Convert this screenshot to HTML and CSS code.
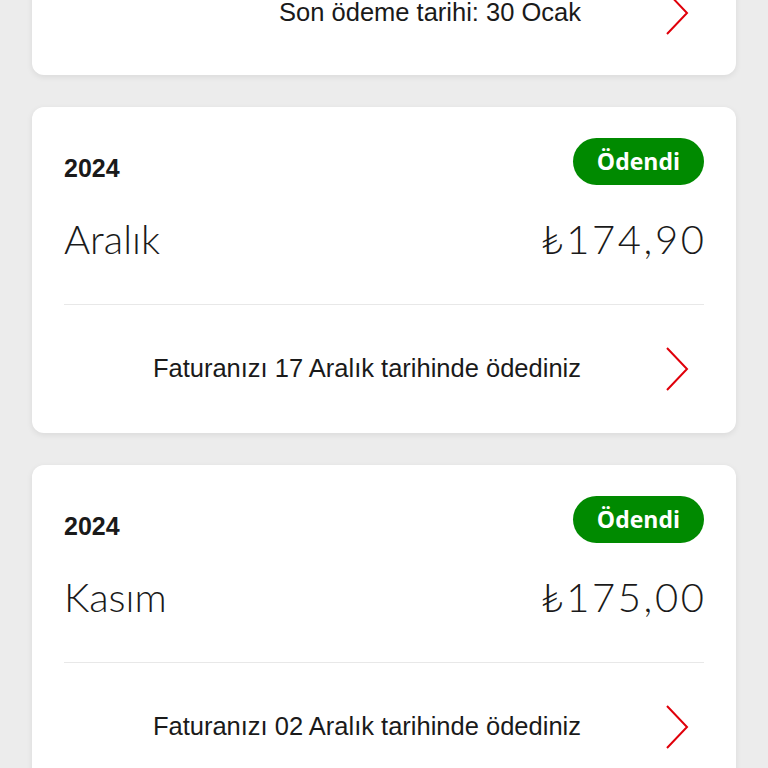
FILE: index.html
```html
<!DOCTYPE html>
<html lang="tr">
<head>
    <meta charset="UTF-8">
    <meta name="viewport" content="width=device-width, initial-scale=1.0">
    <title>Faturalarım</title>
    <link rel="stylesheet" href="styles.css">
</head>
<body>
    <div class="bill-list">
        <!-- Liste kaydirilmis: ilk kartin sadece alt kismi gorunuyor -->
        <div class="card card-partial">
            <div class="card-foot">
                <span class="foot-text">Son ödeme tarihi: 30 Ocak</span>
                <svg class="chevron" viewBox="0 0 24 44"><polyline points="2,1 22,22 2,43"/></svg>
            </div>
        </div>

        <div class="card">
            <div class="card-head">
                <span class="year">2024</span>
                <span class="badge">Ödendi</span>
            </div>
            <div class="card-main">
                <span class="month">Aralık</span>
                <span class="amount">₺174,90</span>
            </div>
            <div class="card-foot">
                <span class="foot-text">Faturanızı 17 Aralık tarihinde ödediniz</span>
                <svg class="chevron" viewBox="0 0 24 44"><polyline points="2,1 22,22 2,43"/></svg>
            </div>
        </div>

        <div class="card">
            <div class="card-head">
                <span class="year">2024</span>
                <span class="badge">Ödendi</span>
            </div>
            <div class="card-main">
                <span class="month">Kasım</span>
                <span class="amount">₺175,00</span>
            </div>
            <div class="card-foot">
                <span class="foot-text">Faturanızı 02 Aralık tarihinde ödediniz</span>
                <svg class="chevron" viewBox="0 0 24 44"><polyline points="2,1 22,22 2,43"/></svg>
            </div>
        </div>
    </div>
</body>
</html>
```

FILE: styles.css
```css
body {
    margin: 0;
    padding: 0;
    background-color: #ececec;
    font-family: "Liberation Sans", Arial, sans-serif;
    color: #1a1a1a;
    overflow: hidden;
}

.bill-list {
    display: flex;
    flex-direction: column;
    gap: 32px;
    padding: 0 32px;
    margin-top: -51px;
}

.card {
    background-color: #fff;
    border-radius: 12px;
    box-shadow: 0 2px 6px rgba(0, 0, 0, 0.08);
    padding: 31px 32px 0;
    height: 326px;
    box-sizing: border-box;
}

.card-partial {
    height: 126px;
    padding-top: 0;
}

.card-head {
    display: flex;
    justify-content: space-between;
    align-items: flex-end;
    height: 47px;
}

.year {
    font-weight: 700;
    font-size: 25px;
    line-height: 1;
    margin-bottom: 4px;
}

.badge {
    height: 47px;
    line-height: 46px;
    padding: 0 24px;
    border-radius: 24px;
    background-color: #008a00;
    color: #fff;
    font-family: "Open Sans", sans-serif;
    font-weight: 700;
    font-size: 23px;
}

.card-main {
    display: flex;
    justify-content: space-between;
    align-items: baseline;
    margin-top: 34px;
    padding-bottom: 45px;
    border-bottom: 1px solid #e8e8e8;
    font-family: Lato, sans-serif;
    font-weight: 300;
    font-size: 40px;
    line-height: 1;
}

.amount {
    letter-spacing: 2.6px;
    margin-right: -2.6px;
}

.card-foot {
    display: flex;
    justify-content: flex-end;
    align-items: center;
    height: 128px;
}

.card-partial .card-foot {
    height: 128px;
}

.foot-text {
    font-size: 25.5px;
    line-height: 1;
}

.chevron {
    width: 24px;
    height: 44px;
    margin-left: 84px;
    margin-right: 15px;
}

.chevron polyline {
    fill: none;
    stroke: #e0000a;
    stroke-width: 2;
}
```
